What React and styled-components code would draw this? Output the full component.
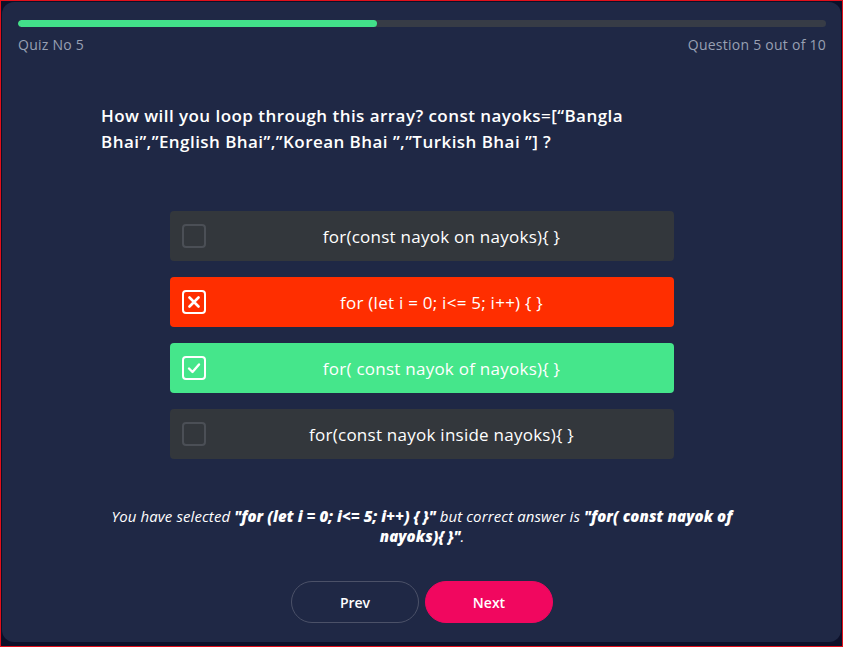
import React from "react";
import styled, { createGlobalStyle } from "styled-components";

const Global = createGlobalStyle`
  html, body { margin: 0; padding: 0; background: #0d1029; }
  * { box-sizing: border-box; }
  body { font-family: "Open Sans", "Noto Sans", sans-serif; }
`;

const Frame = styled.div`
  width: 843px;
  height: 647px;
  border: 1px solid #e0101a;
  background: #0d1029;
  padding: 1px 1px 4px 1px;
`;

const Card = styled.div`
  height: 100%;
  background: #1f2845;
  border-radius: 12px;
  padding: 18px 15px 0 16px;
  display: flex;
  flex-direction: column;
  color: #fff;
`;

const Track = styled.div`
  height: 7px;
  border-radius: 4px;
  background: #373c46;
  overflow: hidden;
`;

const Fill = styled.div`
  height: 100%;
  border-radius: 4px;
  background: #42e08a;
`;

const MetaRow = styled.div`
  display: flex;
  justify-content: space-between;
  margin-top: 8px;
  font-size: 14px;
  line-height: 20px;
  color: #98a0b3;
  letter-spacing: 0.25px;
`;

const Main = styled.div`
  width: 642px;
  margin: 0 auto;
  display: flex;
  flex-direction: column;
`;

const Question = styled.h2`
  margin: 48px 0 0;
  width: 580px;
  font-size: 17px;
  font-weight: 600;
  line-height: 26px;
  letter-spacing: 0.45px;
  color: #fff;
`;

const Options = styled.div`
  margin: 56px auto 0;
  width: 504px;
  display: flex;
  flex-direction: column;
  gap: 16px;
`;

const bg = { idle: "#33373c", wrong: "#ff2e00", right: "#45e68b" };

const Option = styled.div`
  height: 50px;
  border-radius: 4px;
  background: ${(p) => bg[p.$state]};
  display: flex;
  align-items: center;
  padding: 0 12px;
  font-size: 17px;
  letter-spacing: 0.25px;
  color: #fff;
`;

const Box = styled.span`
  width: 24px;
  height: 24px;
  border-radius: 4px;
  border: 2px solid ${(p) => (p.$state === "idle" ? "#4b4f56" : "#fff")};
  display: flex;
  align-items: center;
  justify-content: center;
  flex: none;
`;

const Label = styled.span`
  flex: 1;
  text-align: center;
  padding-left: 15px;
`;

const Feedback = styled.p`
  margin: 47px 0 0;
  text-align: center;
  font-size: 15px;
  font-style: italic;
  line-height: 20px;
  letter-spacing: 0.1px;
  color: #fff;
  b { font-weight: 800; }
`;

const Buttons = styled.div`
  margin-top: 35px;
  display: flex;
  justify-content: center;
  gap: 6px;
`;

const Btn = styled.button`
  width: 128px;
  height: 42px;
  border-radius: 21px;
  font-family: inherit;
  font-size: 14px;
  font-weight: 600;
  color: #fff;
  cursor: pointer;
  border: 1px solid ${(p) => (p.$primary ? "#f1075f" : "#4b5168")};
  background: ${(p) => (p.$primary ? "#f1075f" : "transparent")};
`;

const options = [
  { text: "for(const nayok on nayoks){ }", state: "idle" },
  { text: "for (let i = 0; i<= 5; i++) { }", state: "wrong" },
  { text: "for( const nayok of nayoks){ }", state: "right" },
  { text: "for(const nayok inside nayoks){ }", state: "idle" },
];

function Mark({ state }) {
  if (state === "wrong")
    return (
      <svg width="12" height="12" viewBox="0 0 12 12">
        <path d="M1.5 1.5l9 9M10.5 1.5l-9 9" stroke="#fff" strokeWidth="2.6" strokeLinecap="round" />
      </svg>
    );
  if (state === "right")
    return (
      <svg width="14" height="12" viewBox="0 0 14 12">
        <path d="M2 6.5l3.5 3.5L12 2.5" stroke="#fff" strokeWidth="2.4" fill="none" strokeLinecap="round" strokeLinejoin="round" />
      </svg>
    );
  return null;
}

export default function App() {
  return (
    <>
      <Global />
      <Frame>
        <Card>
          <Track>
            <Fill style={{ width: "44.4%" }} />
          </Track>
          <MetaRow>
            <span>Quiz No 5</span>
            <span>Question 5 out of 10</span>
          </MetaRow>
          <Main>
            <Question>
              How will you loop through this array? const nayoks=[“Bangla Bhai”,”English Bhai”,”Korean Bhai ”,”Turkish Bhai ”] ?
            </Question>
            <Options>
              {options.map((o) => (
                <Option key={o.text} $state={o.state}>
                  <Box $state={o.state}>
                    <Mark state={o.state} />
                  </Box>
                  <Label>{o.text}</Label>
                </Option>
              ))}
            </Options>
            <Feedback>
              You have selected <b>"for (let i = 0; i&lt;= 5; i++) {"{ }"}"</b> but correct answer is{" "}
              <b>"for( const nayok of</b> <b>nayoks){"{ }"}"</b>.
            </Feedback>
          </Main>
          <Buttons>
            <Btn>Prev</Btn>
            <Btn $primary>Next</Btn>
          </Buttons>
        </Card>
      </Frame>
    </>
  );
}
